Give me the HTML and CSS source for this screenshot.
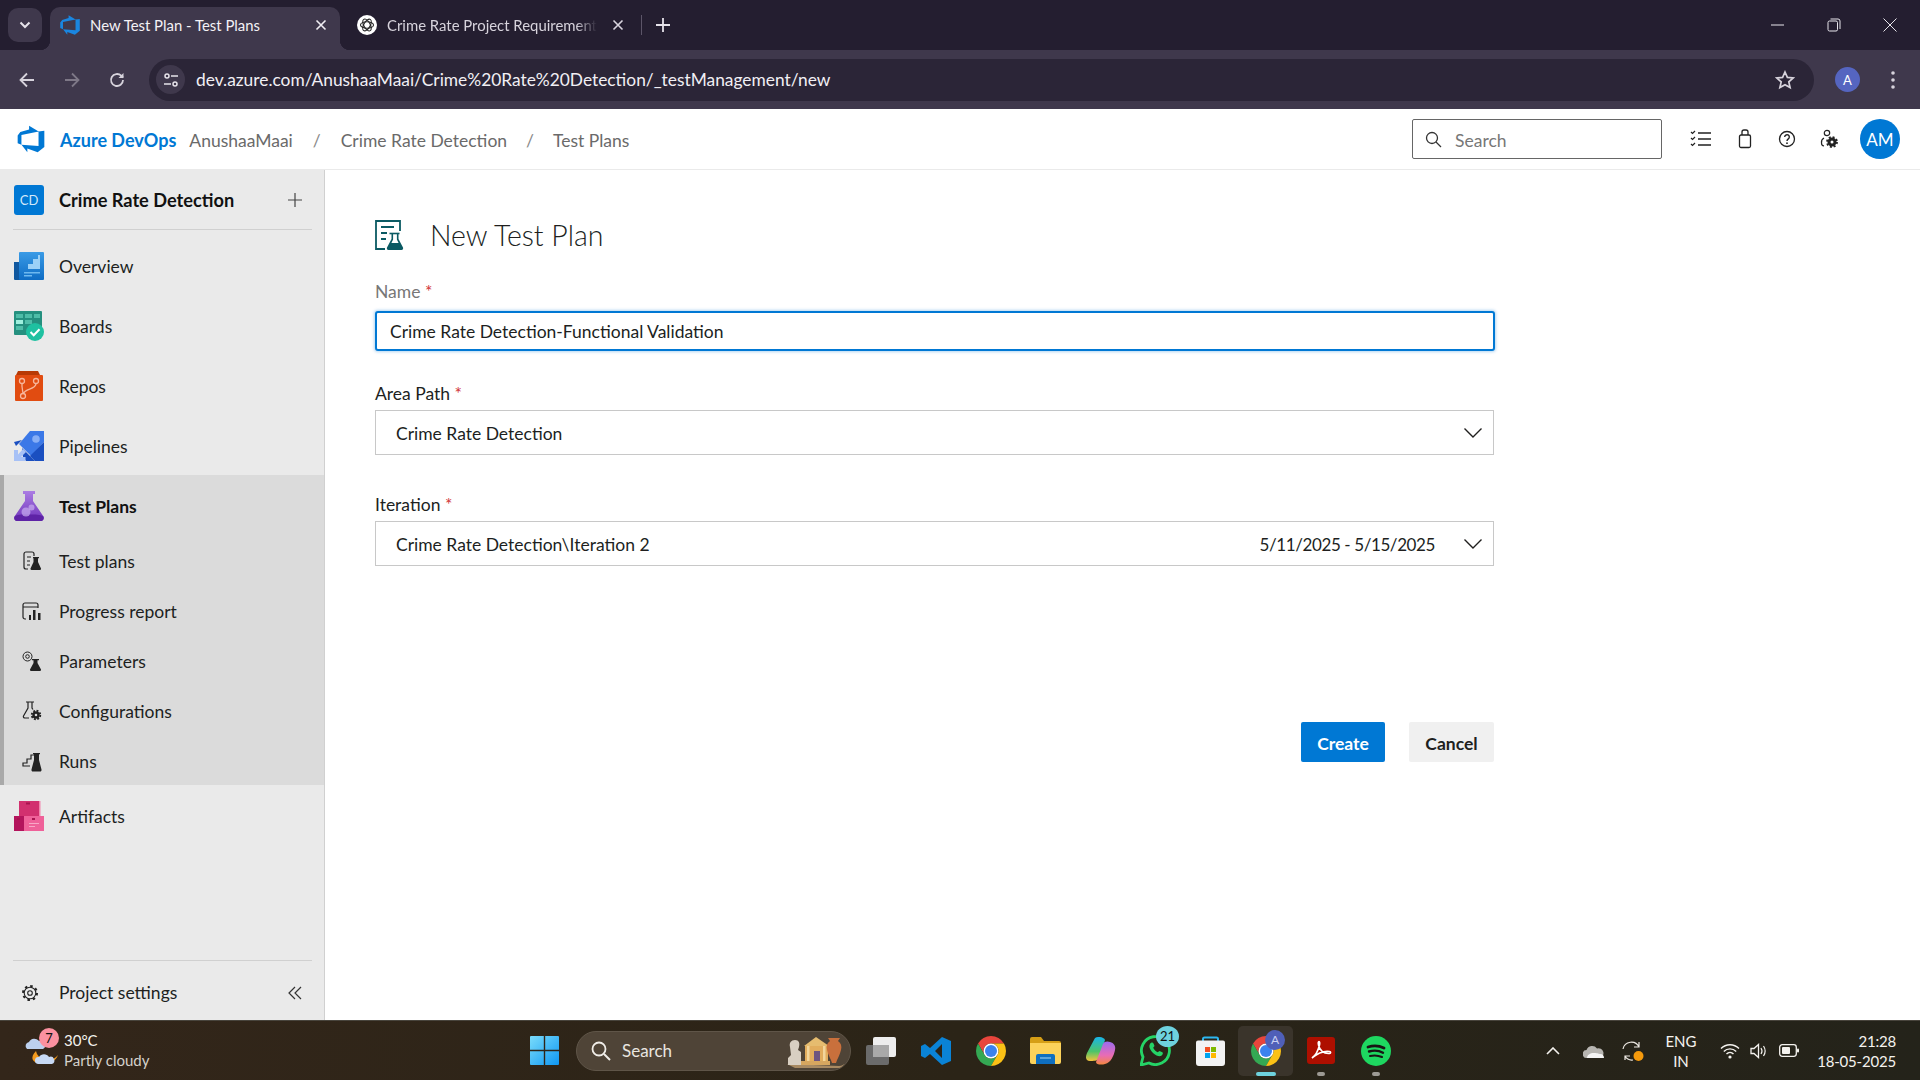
FILE: index.html
```html
<!DOCTYPE html>
<html lang="en">
<head>
<meta charset="utf-8">
<title>New Test Plan - Test Plans</title>
<link rel="stylesheet" href="styles.css">
</head>
<body>
<svg class="defs" width="0" height="0" aria-hidden="true">
  <symbol id="chrome" viewBox="0 0 24 24">
    <path fill="#e8453c" d="M1.61 6A12 12 0 0 1 22.39 6H12A6 6 0 0 0 6.8 15Z"/>
    <path fill="#34a853" d="M1.61 6A12 12 0 0 0 12 24L17.2 15A6 6 0 0 1 6.8 15Z"/>
    <path fill="#fbc116" d="M22.39 6A12 12 0 0 1 12 24L17.2 15A6 6 0 0 0 12 6Z"/>
    <circle cx="12" cy="12" r="6" fill="#fff"/>
    <circle cx="12" cy="12" r="4.8" fill="#3b82ee"/>
  </symbol>
  <symbol id="ado" viewBox="0 0 18 18">
    <path d="M17 4v9.74l-4 3.28-6.2-2.26V17L3.29 12.41l10.23.8V4.44zm-3.41.49L7.85 1v2.29L2.58 4.84 1 6.87v4.61l2.26 1V6.57z"/>
  </symbol>
  <symbol id="chev" viewBox="0 0 20 12">
    <path d="M1.5 1.5 10 10l8.5-8.5" fill="none" stroke="#201f1e" stroke-width="1.4"/>
  </symbol>
</svg>

<div class="tabbar">
  <div class="tab-switch"><svg width="12" height="8" viewBox="0 0 12 8"><path d="M1.5 1.5 6 6l4.5-4.5" fill="none" stroke="#e6e3ea" stroke-width="2"/></svg></div>
  <div class="tab tab-active">
    <svg class="tab-fav fav-blue" width="22" height="22"><use href="#ado"/></svg>
    <span class="tab-title">New Test Plan - Test Plans</span>
    <svg class="tab-x" width="12" height="12" viewBox="0 0 12 12"><path d="M1.5 1.5l9 9m0-9l-9 9" stroke="#f0eef3" stroke-width="1.6"/></svg>
  </div>
  <div class="tab tab-idle">
    <svg class="tab-fav" width="20" height="20" viewBox="0 0 20 20"><circle cx="10" cy="10" r="10" fill="#fff"/><g fill="none" stroke="#222" stroke-width="1.1"><ellipse cx="10" cy="10" rx="6.5" ry="3.2"/><ellipse cx="10" cy="10" rx="6.5" ry="3.2" transform="rotate(60 10 10)"/><ellipse cx="10" cy="10" rx="6.5" ry="3.2" transform="rotate(120 10 10)"/></g></svg>
    <span class="tab-title tab-fade">Crime Rate Project Requirements</span>
    <svg class="tab-x" width="12" height="12" viewBox="0 0 12 12"><path d="M1.5 1.5l9 9m0-9l-9 9" stroke="#d9d5de" stroke-width="1.6"/></svg>
  </div>
  <span class="tab-sep"></span>
  <svg class="tab-new" width="14" height="14" viewBox="0 0 14 14"><path d="M7 0v14M0 7h14" stroke="#e6e3ea" stroke-width="1.8"/></svg>
  <div class="win-ctrls">
    <svg width="14" height="14" viewBox="0 0 14 14"><path d="M0 7h13" stroke="#e8e6ec" stroke-width="1"/></svg>
    <svg width="14" height="14" viewBox="0 0 14 14"><rect x="1" y="3" width="9.5" height="10" rx="1.5" fill="none" stroke="#e8e6ec"/><path d="M3.5 1h7.5a2 2 0 0 1 2 2v8" fill="none" stroke="#e8e6ec"/></svg>
    <svg width="14" height="14" viewBox="0 0 14 14"><path d="M.5.5l13 13m0-13l-13 13" stroke="#e8e6ec" stroke-width="1"/></svg>
  </div>
</div>

<div class="toolbar">
  <svg class="nav-btn" width="18" height="18" viewBox="0 0 18 18"><path d="M16 9H3m6-6.500L2.500 9 9 15.500" fill="none" stroke="#d7d3dc" stroke-width="1.8"/></svg>
  <svg class="nav-btn" width="18" height="18" viewBox="0 0 18 18"><path d="M2 9h13M9 2.500 15.500 9 9 15.500" fill="none" stroke="#7e7887" stroke-width="1.8"/></svg>
  <svg class="nav-btn" width="18" height="18" viewBox="0 0 18 18"><path d="M15 9a6 6 0 1 1-1.800-4.300L15 6.500" fill="none" stroke="#d7d3dc" stroke-width="1.8"/><path d="M15.500 2v5h-5z" fill="#d7d3dc"/></svg>
  <div class="omnibox">
    <span class="site-info"><svg width="16" height="16" viewBox="0 0 16 16"><g fill="none" stroke="#e6e3ea" stroke-width="1.500"><circle cx="4" cy="4" r="2"/><path d="M8 4h7M1 12h7"/><circle cx="12" cy="12" r="2"/></g></svg></span>
    <span class="url">dev.azure.com/AnushaaMaai/Crime%20Rate%20Detection/_testManagement/new</span>
    <svg class="star" width="20" height="20" viewBox="0 0 20 20"><path d="M10 2l2.400 5.400 5.800.6-4.400 3.900 1.300 5.700L10 14.700l-5.100 2.900 1.300-5.700L1.800 8l5.800-.6z" fill="none" stroke="#d7d3dc" stroke-width="1.700"/></svg>
  </div>
  <span class="profile">A</span>
  <svg class="dots" width="4" height="18" viewBox="0 0 4 18"><circle cx="2" cy="2" r="1.800" fill="#d7d3dc"/><circle cx="2" cy="9" r="1.800" fill="#d7d3dc"/><circle cx="2" cy="16" r="1.800" fill="#d7d3dc"/></svg>
</div>

<header class="adoheader">
  <svg class="logo ado-blue" width="30" height="30"><use href="#ado"/></svg>
  <span class="brand">Azure DevOps</span>
  <nav class="crumbs">
    <span class="crumb">AnushaaMaai</span><span class="slash">/</span>
    <span class="crumb">Crime Rate Detection</span><span class="slash">/</span>
    <span class="crumb">Test Plans</span>
  </nav>
  <div class="hsearch">
    <svg width="17" height="17" viewBox="0 0 17 17"><circle cx="7" cy="7" r="5.500" fill="none" stroke="#333" stroke-width="1.300"/><path d="M11 11l5 5" stroke="#333" stroke-width="1.300"/></svg>
    <span>Search</span>
  </div>
  <div class="hicons">
    <svg width="22" height="20" viewBox="0 0 22 20"><path d="M8 4h13M8 10h13M8 16h13" stroke="#222" stroke-width="1.300"/><path d="M1 3l1.500 1.500L5 2M1 9l1.500 1.500L5 8M1 15l1.500 1.500L5 14" fill="none" stroke="#222" stroke-width="1.200"/></svg>
    <svg width="14" height="20" viewBox="0 0 14 20"><rect x="1.500" y="6" width="11" height="12.500" rx="1.500" fill="none" stroke="#222" stroke-width="1.300"/><path d="M4 6V3a2 2 0 0 1 2-2h2a2 2 0 0 1 2 2v3" fill="none" stroke="#222" stroke-width="1.300"/></svg>
    <svg width="18" height="18" viewBox="0 0 18 18"><circle cx="9" cy="9" r="7.500" fill="none" stroke="#222" stroke-width="1.300"/><path d="M6.700 7a2.300 2.300 0 1 1 3.600 1.900C9.400 9.500 9 10 9 11" fill="none" stroke="#222" stroke-width="1.400"/><circle cx="9" cy="13.200" r=".9" fill="#222"/></svg>
    <svg width="18" height="20" viewBox="0 0 18 20"><circle cx="7" cy="4" r="2.700" fill="none" stroke="#222" stroke-width="1.200"/><path d="M4 9a5 5 0 0 0-2.500 5A3 3 0 0 0 4 17" fill="none" stroke="#222" stroke-width="1.200"/><circle cx="12" cy="13" r="3" fill="none" stroke="#222" stroke-width="3"/><circle cx="12" cy="13" r="5" fill="none" stroke="#222" stroke-width="1.800" stroke-dasharray="2 1.930"/></svg>
  </div>
  <span class="avatar">AM</span>
</header>

<div class="workspace">
  <aside class="sidebar">
    <div class="project">
      <span class="project-badge">CD</span>
      <span class="project-name">Crime Rate Detection</span>
      <svg width="16" height="16" viewBox="0 0 16 16"><path d="M8 1v14M1 8h14" stroke="#444" stroke-width="1.200"/></svg>
    </div>
    <div class="nav">
      <a class="nav-item">
        <svg class="nav-ico" width="30" height="30" viewBox="0 0 30 30"><defs><linearGradient id="ov" x1="0" y1="0" x2="0" y2="1"><stop offset="0" stop-color="#3a9be6"/><stop offset="1" stop-color="#0e6cc4"/></linearGradient></defs><path d="M0 11h6v18H1a1 1 0 0 1-1-1z" fill="#10589f"/><rect x="5" y="1" width="25" height="28" rx="1" fill="url(#ov)"/><path d="M14 18v-5h5V8h5V4h2v14z" fill="#9bd1f7"/><path d="M10 21h16v1.500H10zM10 24h8v1.500h-8z" fill="#6db8ef"/></svg>
        <span>Overview</span>
      </a>
      <a class="nav-item">
        <svg class="nav-ico" width="30" height="30" viewBox="0 0 30 30"><rect width="28" height="24" rx="1" fill="#25907f"/><g fill="#4fbda8"><rect x="2" y="3" width="7" height="4"/><rect x="11" y="3" width="7" height="4"/><rect x="20" y="3" width="6" height="4"/><rect x="11" y="9" width="7" height="4"/><rect x="2" y="15" width="7" height="4"/></g><rect x="2" y="9" width="7" height="4" fill="#9ff0de"/><circle cx="21" cy="21" r="9" fill="#1fc1a1"/><path d="M16.500 21l3.200 3.200 5.800-6" fill="none" stroke="#fff" stroke-width="2"/></svg>
        <span>Boards</span>
      </a>
      <a class="nav-item">
        <svg class="nav-ico" width="30" height="30" viewBox="0 0 30 30"><path d="M4 0h20l2 4H2z" fill="#b83a06"/><rect x="1" y="4" width="28" height="26" rx="1" fill="#e14c11"/><g fill="none" stroke="#f7b79d" stroke-width="1.300"><circle cx="8" cy="10" r="2.500"/><circle cx="22" cy="10" r="2.500"/><circle cx="9" cy="25" r="2.500"/><path d="M8 12.500v3l1 7M22 12.500c0 6-11 5-12.500 10"/></g></svg>
        <span>Repos</span>
      </a>
      <a class="nav-item">
        <svg class="nav-ico" width="30" height="30" viewBox="0 0 30 30"><path d="M16 0h14v11L17 25 5 13z" fill="#3b78e7"/><path d="M0 11 8 9 2 15z" fill="#1a4fc0"/><path d="M30 11v19h-9l-5-5z" fill="#1a4fc0"/><path d="M8 17 15 24 21 30H12L9 26z" fill="#1a4fc0"/><circle cx="22" cy="8" r="3.800" fill="#87aef5"/><path d="M0 30V19h4v4.500L9 18l3 3-5 5h4.500v4z" fill="#a7c1f6"/></svg>
        <span>Pipelines</span>
      </a>
      <div class="nav-group">
        <a class="nav-item nav-current">
          <svg class="nav-ico" width="30" height="30" viewBox="0 0 30 30"><defs><linearGradient id="fl" x1="0" y1="0" x2="0" y2="1"><stop offset="0" stop-color="#ab7de3"/><stop offset="1" stop-color="#6f33bb"/></linearGradient></defs><path d="M9 0h12v3h-2v7l10.500 15.500c1 2-.2 4.500-2.500 4.500H3c-2.300 0-3.500-2.500-2.500-4.500L11 10V3H9z" fill="url(#fl)"/><path d="M.6 25.500 c3-2 6-2 14-2s11 0 14.800 2c.8 2-.4 4.500-2.400 4.500H3c-2.300 0-3.400-2.500-2.400-4.500z" fill="#5e23a6"/><circle cx="12" cy="21" r="4.500" fill="#c9aef0" fill-opacity=".7"/><circle cx="17.500" cy="16.500" r="3" fill="#c9aef0" fill-opacity=".7"/></svg>
          <span>Test Plans</span>
        </a>
        <a class="nav-sub">
          <svg class="sub-ico" width="20" height="20" viewBox="0 0 20 20"><path d="M10 1H4a2 2 0 0 0-2 2v13a2 2 0 0 0 2 2h2M10 1a2 2 0 0 1 2 2v2" fill="none" stroke="#222" stroke-width="1.200"/><path d="M5 6h4M5 10h3M5 14h3" stroke="#222" stroke-width="1.200"/><path d="M11 6h6v1.300h-1V11l3 6.500c.2.700-.2 1.500-1 1.500H9.500c-.8 0-1.200-.8-1-1.500l3-6.500V7.300H11z" fill="#222"/></svg>
          <span>Test plans</span>
        </a>
        <a class="nav-sub">
          <svg class="sub-ico" width="20" height="20" viewBox="0 0 20 20"><path d="M4 18H3a2 2 0 0 1-2-2V4a2 2 0 0 1 2-2h11a2 2 0 0 1 2 2v3M1 6h15" fill="none" stroke="#222" stroke-width="1.200"/><path d="M7 14h2v5H7zM11 9h2.500v10H11zM16 12h2.500v7H16z" fill="#222"/></svg>
          <span>Progress report</span>
        </a>
        <a class="nav-sub">
          <svg class="sub-ico" width="20" height="20" viewBox="0 0 20 20"><circle cx="5.500" cy="5.500" r="4.500" fill="none" stroke="#222" stroke-width="1"/><circle cx="5.500" cy="5.500" r="1.800" fill="none" stroke="#222" stroke-width="1"/><path d="M10 8h7v1.300h-1.500V12l3.500 6.500c.2.700-.2 1.500-1 1.500H9c-.8 0-1.200-.8-1-1.500l3.500-6.500V9.300H10z" fill="#222"/></svg>
          <span>Parameters</span>
        </a>
        <a class="nav-sub">
          <svg class="sub-ico" width="20" height="20" viewBox="0 0 20 20"><path d="M4 1h8M6 1v6L1.500 15c-.5 1 .2 2 1.500 2h4M10 1v6l1 1.500" fill="none" stroke="#222" stroke-width="1.200"/><circle cx="14" cy="14" r="2.500" fill="none" stroke="#222" stroke-width="2.400"/><circle cx="14" cy="14" r="4.300" fill="none" stroke="#222" stroke-width="1.800" stroke-dasharray="1.900 1.480"/></svg>
          <span>Configurations</span>
        </a>
        <a class="nav-sub">
          <svg class="sub-ico" width="20" height="20" viewBox="0 0 20 20"><path d="M8 14H1v-3h4V7h4V3h3" fill="none" stroke="#222" stroke-width="1.200"/><path d="M11 1h7v1.300h-1V8l2.500 9.500c.2 1-.3 2-1.300 2h-7.400c-1 0-1.500-1-1.300-2L12 8V2.300h-1z" fill="#222"/></svg>
          <span>Runs</span>
        </a>
      </div>
      <a class="nav-item">
        <svg class="nav-ico" width="30" height="30" viewBox="0 0 30 30"><rect x="5" width="20" height="15" fill="#d2306f"/><rect x="25" width="1.500" height="15" fill="#f186ad"/><rect y="15" width="10" height="15" fill="#b3145c"/><rect x="10" y="15" width="20" height="15" fill="#ef6199"/><path d="M12 1.500h4v2h-4zM3 17h3v2H3zM18 17h3v2h-3z" fill="#a9124f"/><path d="M15 22h10v1H15zM15 25h6v1h-6z" fill="#f8a7c6"/></svg>
        <span>Artifacts</span>
      </a>
    </div>
    <div class="side-foot">
      <svg class="foot-gear" width="18" height="18" viewBox="0 0 18 18"><circle cx="9" cy="9" r="5.800" fill="none" stroke="#222" stroke-width="1.100"/><circle cx="9" cy="9" r="7" fill="none" stroke="#222" stroke-width="2" stroke-dasharray="2.500 3"/><circle cx="9" cy="9" r="2.300" fill="none" stroke="#222" stroke-width="1.100"/></svg>
      <span class="foot-text">Project settings</span>
      <svg width="14" height="14" viewBox="0 0 14 14"><path d="M7 1 1 7l6 6M13 1 7 7l6 6" fill="none" stroke="#333" stroke-width="1.200"/></svg>
    </div>
  </aside>

  <main class="content">
    <div class="title-row">
      <svg width="29" height="30" viewBox="0 0 29 30"><path d="M10 29H1V1h24v10" fill="none" stroke="#0b5a63" stroke-width="1.800"/><path d="M6 7h13M6 13h6M6 19h5" stroke="#0b5a63" stroke-width="1.800"/><path d="M14.500 13.500h10" stroke="#0b5a63" stroke-width="1.600"/><path d="M16.500 14v5L12 27.500c-.5 1 .2 2.500 1.500 2.500h13c1.300 0 2-1.500 1.500-2.500L23.500 19v-5h-1.600v5.500l1.700 3.500h-7.200l1.700-3.500V14z" fill="#0b5a63"/><path d="M16 23h8l3.500 6h-15z" fill="#0b5a63"/></svg>
      <h1>New Test Plan</h1>
    </div>
    <label class="field-label label-dim">Name <em>*</em></label>
    <input class="text-input" value="Crime Rate Detection-Functional Validation">
    <label class="field-label label-gap">Area Path <em>*</em></label>
    <div class="select"><span class="grow">Crime Rate Detection</span><svg width="20" height="12"><use href="#chev"/></svg></div>
    <label class="field-label label-gap2">Iteration <em>*</em></label>
    <div class="select"><span class="grow">Crime Rate Detection\Iteration 2</span><span class="dates">5/11/2025 - 5/15/2025</span><svg width="20" height="12"><use href="#chev"/></svg></div>
    <div class="actions">
      <button class="btn btn-primary">Create</button>
      <button class="btn">Cancel</button>
    </div>
  </main>
</div>

<footer class="taskbar">
  <div class="weather">
    <svg width="36" height="40" viewBox="0 0 36 40"><path d="M12 20a12 10 0 0 0 22 4c-3 8-12 10-20 8-6-1-8-6-2-12z" fill="#f29a1f"/><path d="M3 18a4 4 0 0 1 2-7 6 6 0 0 1 10-1 4 4 0 0 1 4 8z" fill="#bcd0ee"/><path d="M14 33a3.500 3.500 0 0 1 1-7 6 6 0 0 1 10 0 3.500 3.500 0 0 1 3 7z" fill="#c7d9f4"/></svg>
    <span class="weather-badge">7</span>
    <div class="weather-text"><span>30°C</span><span class="weather-sub">Partly cloudy</span></div>
  </div>
  <svg class="start" width="29" height="29" viewBox="0 0 29 29"><defs><linearGradient id="win" x1="0" y1="0" x2="1" y2="1"><stop offset="0" stop-color="#7adcfb"/><stop offset="1" stop-color="#0f97f2"/></linearGradient></defs><path d="M0 1a1 1 0 0 1 1-1h12.800v13.800H0zM15.200 0H28a1 1 0 0 1 1 1v12.800H15.200zM0 15.200h13.800V29H1a1 1 0 0 1-1-1zM15.200 15.200H29V28a1 1 0 0 1-1 1H15.200z" fill="url(#win)"/></svg>
  <div class="tsearch">
    <svg width="20" height="20" viewBox="0 0 20 20"><circle cx="8" cy="8" r="6.500" fill="none" stroke="#f0ede8" stroke-width="1.800"/><path d="M13 13l6 6" stroke="#f0ede8" stroke-width="2"/></svg>
    <span class="grow">Search</span>
    <svg class="museum" width="58" height="34" viewBox="0 0 58 34"><path d="M0 30 52 32c3 0 5-2 6-2l-4 4H8z" fill="#a88a62"/><path d="M3 13c-1-4 1-7 5-7s5 3 4 7l-1 3 3 2v13H1v-7l3-3z" fill="#d8cfc2"/><path d="M17 12 29 3l13 9z" fill="#e6bc6f"/><rect x="18" y="12" width="23" height="15" fill="#e2ad5d"/><rect x="27" y="17" width="6" height="10" fill="#6e5580"/><rect x="20" y="12" width="2.500" height="15" fill="#f3d69b"/><rect x="36" y="12" width="2.500" height="15" fill="#f3d69b"/><path d="M14 27h29v4H14z" fill="#d6a65f"/><path d="M41 4h12l-2 3c3 2 4 5 3 9-1 5-4 9-5 13h-4c-1-4-4-8-5-13-1-4 0-7 3-9z" fill="#c9703c"/></svg>
  </div>
  <div class="tslot"><svg width="30" height="28" viewBox="0 0 30 28"><rect y="8" width="23" height="20" rx="2" fill="#6b6b6b"/><rect x="7" width="23" height="20" rx="2" fill="#eeeeee"/><rect x="7" y="8" width="16" height="12" fill="#a9a9a9"/></svg></div>
  <div class="tslot"><svg width="30" height="30" viewBox="0 0 30 30"><path d="M21 1 30 5v20l-9 4L9 18l-5 4-4-2V10l4-2 5 4zM21 8 14 15l7 7z" fill="#0a83d6"/></svg></div>
  <div class="tslot"><svg width="30" height="30"><use href="#chrome"/></svg></div>
  <div class="tslot"><svg width="31" height="27" viewBox="0 0 31 27"><path d="M0 2a2 2 0 0 1 2-2h9l3 4h15a2 2 0 0 1 2 2v4H0z" fill="#d69f16"/><path d="M0 6h31v19a2 2 0 0 1-2 2H2a2 2 0 0 1-2-2z" fill="#fcd25a"/><path d="M6 19a2 2 0 0 1 2-2h15a2 2 0 0 1 2 2v8H6z" fill="#0f6fc0"/><path d="M10 21h11" stroke="#8ec8f2" stroke-width="1.200"/></svg></div>
  <div class="tslot"><svg width="30" height="28" viewBox="0 0 30 28"><defs><linearGradient id="cp1" x1="0" y1="0" x2="0" y2="1"><stop offset="0" stop-color="#18b4e8"/><stop offset=".6" stop-color="#4cc46a"/><stop offset="1" stop-color="#f5c33b"/></linearGradient><linearGradient id="cp2" x1="0" y1="0" x2="0" y2="1"><stop offset="0" stop-color="#9a6bf0"/><stop offset=".6" stop-color="#e86cb5"/><stop offset="1" stop-color="#f4873f"/></linearGradient></defs><path d="M9 1c3-2 9-1 10 2l-6 18c-1 3-6 3-9 3-4 0-5-3-3-8z" fill="url(#cp1)"/><path d="M19 27c-3 1-9 1-9-2l7-18c1-3 5-3 7-2 4 1 6 4 5 8-1 5-4 13-10 14z" fill="url(#cp2)"/></svg></div>
  <div class="tslot"><svg width="31" height="31" viewBox="0 0 31 31"><path d="M1 30l2-8a14 14 0 1 1 6 6z" fill="none" stroke="#25d366" stroke-width="2.800"/><path d="M10 9c1-2 3-2 3.500-.5l1 2.500-1.300 1.700c1 2 2.600 3.500 4.500 4.500L19.500 16l2.800 1.300c1 .5.700 2.400-1 3.500-2 1.200-5 0-8-2.500C10 15 8.500 11.500 10 9z" fill="#25d366"/></svg><span class="wa-badge">21</span></div>
  <div class="tslot"><svg width="29" height="30" viewBox="0 0 29 30"><path d="M7 6V3a1.500 1.500 0 0 1 1.500-1.500h12A1.500 1.500 0 0 1 22 3v3" fill="none" stroke="#2db7f0" stroke-width="2"/><path d="M0 6.500a2 2 0 0 1 2-2h25a2 2 0 0 1 2 2V27a3 3 0 0 1-3 3H3a3 3 0 0 1-3-3z" fill="#f3f3f3"/><rect x="9" y="11" width="5" height="5" fill="#f25022"/><rect x="15" y="11" width="5" height="5" fill="#7fba00"/><rect x="9" y="17" width="5" height="5" fill="#00a4ef"/><rect x="15" y="17" width="5" height="5" fill="#ffb900"/></svg></div>
  <div class="tslot tslot-active"><svg class="chrome-lg" width="30" height="30"><use href="#chrome"/></svg><span class="chrome-badge">A</span><span class="ind ind-on"></span></div>
  <div class="tslot"><svg width="28" height="27" viewBox="0 0 28 27"><rect width="28" height="27" rx="3" fill="#ae0f00"/><path d="M5 21c3-2 6-7 7.500-13 .4-2 .2-3.500-.5-3.500s-1 1.500-.5 3.500c1 5 5 9 11 8.500 1.500-.3 1.500-1.700 0-2-4-.6-11 1-17.500 6.500z" fill="none" stroke="#fff" stroke-width="1.600"/></svg><span class="ind"></span></div>
  <div class="tslot"><svg width="30" height="30" viewBox="0 0 30 30"><circle cx="15" cy="15" r="15" fill="#1ed760"/><g fill="none" stroke="#191414" stroke-linecap="round"><path d="M7 11c6-2 11-1.500 16 1" stroke-width="2.800"/><path d="M8 15.500c5-1.500 10-1 14 1.200" stroke-width="2.400"/><path d="M9 20c4-1 8-.8 12 1" stroke-width="2"/></g></svg><span class="ind"></span></div>
  <div class="tray">
    <div class="tray-slot tw40"><svg width="14" height="8" viewBox="0 0 14 8"><path d="M1 7l6-6 6 6" fill="none" stroke="#f4f2ee" stroke-width="1.600"/></svg></div>
    <div class="tray-slot tw40"><svg width="21" height="14" viewBox="0 0 21 14"><path d="M4 14a4 4 0 0 1-.5-8A6 6 0 0 1 14 4.500 4.500 4.500 0 0 1 17 14z" fill="#b7b5b1"/><path d="M4 14c0-3 3-5 7-5 4 0 5 1 6 1 3 0 4 2 4 4z" fill="#f4f4f4"/></svg></div>
    <div class="tray-slot tw40"><svg width="22" height="22" viewBox="0 0 22 22"><path d="M1 9a8.500 8.500 0 0 1 16-2M17 2v5h-5M3 20v-4h5M3 16a8 8 0 0 0 8 4" fill="none" stroke="#eeeae4" stroke-width="1.200"/><circle cx="16.500" cy="16" r="5" fill="#f59a0c"/></svg></div>
    <div class="tray-slot tw56 tray-lang"><span>ENG</span><span>IN</span></div>
    <div class="tray-slot tw38"><svg width="20" height="16" viewBox="0 0 20 16"><g fill="none" stroke="#f4f2ee" stroke-width="1.400"><path d="M1 5.500c5-5 13-5 18 0M3.800 8.500c3.500-3.500 8.900-3.500 12.400 0M6.500 11c2-2 5-2 7 0"/></g><circle cx="10" cy="14" r="1.600" fill="#f4f2ee"/></svg></div>
    <div class="tray-slot tw20"><svg width="18" height="16" viewBox="0 0 18 16"><path d="M1 5.500h3L8.500 1.500v13L4 10.500H1z" fill="none" stroke="#f4f2ee" stroke-width="1.300"/><path d="M11 5c1.200 1.800 1.200 4.200 0 6M13.500 3c2 3 2 7 0 10" fill="none" stroke="#f4f2ee" stroke-width="1.200"/></svg></div>
    <div class="tray-slot tw42"><svg width="20" height="13" viewBox="0 0 20 13"><rect x=".7" y=".7" width="16.600" height="11.600" rx="2.500" fill="none" stroke="#f4f2ee" stroke-width="1.300"/><rect x="3" y="3" width="8" height="7" rx="1" fill="#f4f2ee"/><rect x="18" y="4.500" width="2" height="4" rx="1" fill="#f4f2ee"/></svg></div>
    <div class="clock"><span>21:28</span><span>18-05-2025</span></div>
  </div>
</footer>
</body>
</html>
```
FILE: styles.css
```css
* { box-sizing: border-box; }
html, body { margin: 0; padding: 0; }
body {
  width: 1920px;
  height: 1080px;
  overflow: hidden;
  display: flex;
  flex-direction: column;
  font-family: "Lato", "Liberation Sans", sans-serif;
  font-size: 17.5px;
  color: #201f1e;
  background: #fff;
}
.defs { position: absolute; }
.grow { flex: 1; }
.ado-blue { fill: #0078d4; }
.fav-blue { fill: #1a86e0; }
svg { flex: none; display: block; }

/* browser tab strip */
.tabbar {
  height: 50px;
  flex: none;
  display: flex;
  align-items: flex-end;
  background: #241e30;
  color: #fff;
  font-size: 14.9px;
}
.tab-switch {
  width: 34px;
  height: 34px;
  margin: 0 0 8px 8px;
  border-radius: 10px;
  background: #3f384c;
  display: flex;
  align-items: center;
  justify-content: center;
}
.tab {
  height: 43px;
  display: flex;
  align-items: center;
  padding: 0 13px 7px 9px;
  flex: none;
}
.tab-active {
  width: 290px;
  margin-left: 8px;
  background: #3f384c;
  border-radius: 10px 10px 0 0;
  position: relative;
}
.tab-active::before,
.tab-active::after {
  content: "";
  position: absolute;
  bottom: 0;
  width: 10px;
  height: 10px;
}
.tab-active::before { left: -10px; background: radial-gradient(circle at 0 0, #241e30 10px, #3f384c 10.500px); }
.tab-active::after { right: -10px; background: radial-gradient(circle at 100% 0, #241e30 10px, #3f384c 10.500px); }
.tab-idle { width: 301px; padding-left: 17px; padding-right: 17px; }
.tab-fav { margin-right: 10px; }
.tab-active .tab-fav { margin-right: 9px; }
.tab-title { flex: 1; white-space: nowrap; overflow: hidden; color: #f4f2f6; }
.tab-idle .tab-title { color: #d7d3dc; }
.tab-fade { -webkit-mask-image: linear-gradient(90deg, #000 90%, transparent 100%); mask-image: linear-gradient(90deg, #000 90%, transparent 100%); margin-right: 7px; }
.tab-x { margin-left: 8px; }
.tab-sep { width: 1px; height: 20px; margin: 0 0 15px 0; background: #5c5568; }
.tab-new { margin: 0 0 18px 14px; }
.win-ctrls {
  margin-left: auto;
  height: 50px;
  display: flex;
  align-items: center;
  gap: 42px;
  padding-right: 23px;
}

/* browser toolbar */
.toolbar {
  height: 59px;
  flex: none;
  display: flex;
  align-items: center;
  background: #3f384c;
  color: #fff;
}
.nav-btn { margin-left: 27px; }
.nav-btn:first-child { margin-left: 18px; }
.omnibox {
  width: 1665px;
  height: 42px;
  margin-left: 23px;
  border-radius: 21px;
  background: #2b2537;
  display: flex;
  align-items: center;
  padding: 0 19px 0 7px;
}
.site-info {
  width: 29px;
  height: 29px;
  border-radius: 50%;
  background: #3f384c;
  display: flex;
  align-items: center;
  justify-content: center;
  margin-right: 11px;
}
.url { flex: 1; font-size: 17.350px; color: #f1eff4; }
.profile {
  width: 25px;
  height: 25px;
  margin-left: 21px;
  border-radius: 50%;
  background: #5565c0;
  color: #fff;
  font-size: 13px;
  display: flex;
  align-items: center;
  justify-content: center;
}
.dots { margin-left: 31px; }

/* ADO header */
.adoheader {
  height: 61px;
  flex: none;
  display: flex;
  align-items: center;
  border-bottom: 1px solid #eaeaea;
  padding-left: 16px;
}
.brand { margin-left: 14px; padding-top: 2px; font-size: 18px; color: #0078d4; font-weight: 700; white-space: nowrap; }
.crumbs { display: flex; align-items: center; margin-left: 13px; padding-top: 2px; color: #6a6a6a; white-space: nowrap; }
.slash { margin: 0 20px; color: #8a8a8a; }
.slash ~ .slash { margin: 0 19px; }
.hsearch {
  margin-left: auto;
  width: 250px;
  height: 40px;
  border: 1px solid #666;
  border-radius: 2px;
  display: flex;
  align-items: center;
  gap: 13px;
  padding-left: 12px;
  color: #777;
}
.hsearch span { padding-top: 2px; }
.hicons { display: flex; align-items: center; margin-left: 28px; gap: 26px; }
.hicons svg:last-child { margin-left: -2px; }
.avatar {
  width: 40px;
  height: 40px;
  margin: 0 20px 0 22px;
  border-radius: 50%;
  background: #0078d4;
  color: #fff;
  display: flex;
  align-items: center;
  justify-content: center;
  font-size: 17px;
}

/* work area */
.workspace { flex: 1; min-height: 0; display: flex; }
.sidebar {
  width: 325px;
  flex: none;
  background: #eaeaea;
  border-right: 1px solid #d0d0d0;
  display: flex;
  flex-direction: column;
}
.project {
  height: 60px;
  margin: 0 12px 0 13px;
  display: flex;
  align-items: center;
  border-bottom: 1px solid #d0d0d0;
  padding-right: 9px;
}
.project-badge {
  width: 30px;
  height: 30px;
  margin: 0 15px 0 1px;
  border-radius: 3px;
  background: #0078d4;
  color: #d4e9fa;
  font-size: 13px;
  display: flex;
  align-items: center;
  justify-content: center;
}
.project-name { flex: 1; font-size: 18.200px; font-weight: 700; color: #111; }
.nav { flex: 1; padding-top: 6px; }
.nav-item {
  height: 60px;
  display: flex;
  align-items: center;
  gap: 15px;
  padding-left: 14px;
}
.nav-group { margin: -1px 0 1px; padding-top: 1px; background: #dbdbdb; border-left: 4px solid #a9a9a9; }
.nav-current { padding-left: 10px; font-weight: 700; color: #111; }
.nav-sub {
  height: 50px;
  display: flex;
  align-items: center;
  padding-left: 18px;
}
.nav-sub:last-child { height: 49px; padding-top: 2px; }
.sub-ico { width: 20px; margin-right: 17px; }
.side-foot {
  height: 60px;
  margin: 0 12px 0 13px;
  border-top: 1px solid #d0d0d0;
  display: flex;
  align-items: center;
  padding: 4px 10px 0 8px;
}
.foot-text { flex: 1; margin-left: 20px; }
.content { flex: 1; padding: 45px 0 0 50px; }
.title-row { height: 40px; display: flex; align-items: center; gap: 26px; }
h1 { margin: 0; font-size: 28.500px; font-weight: 300; color: #201f1e; }
.field-label { display: block; height: 24px; line-height: 26px; margin-top: 24px; }
.field-label em { color: #d13438; font-style: normal; }
.label-dim { color: #777; }
.label-gap { margin-top: 30px; }
.label-gap2 { margin-top: 37px; }
.text-input {
  display: block;
  width: 1120px;
  height: 40px;
  margin-top: 8px;
  padding: 0 13px;
  border: 2px solid #0078d4;
  border-radius: 3px;
  box-shadow: 0 0 3px 1px rgba(0, 120, 212, .3);
  font: inherit;
  color: #201f1e;
  outline: none;
}
.select {
  width: 1119px;
  height: 45px;
  margin-top: 5px;
  border: 1px solid #c8c8c8;
  display: flex;
  align-items: center;
  padding: 0 10px 0 20px;
}
.select span { padding-top: 2px; }
.dates { margin-right: 28px; font-size: 17px; letter-spacing: -.4px; }
.actions { width: 1119px; margin-top: 156px; display: flex; justify-content: flex-end; gap: 24px; }
.btn {
  height: 40px;
  width: 85px;
  padding: 2px 0 0;
  border: 0;
  border-radius: 2px;
  background: #f0f0f0;
  color: #201f1e;
  font: inherit;
  font-weight: 700;
}
.btn-primary { width: 84px; background: #0078d4; color: #fff; }

/* windows taskbar */
.taskbar {
  height: 60px;
  flex: none;
  display: flex;
  align-items: center;
  background: linear-gradient(90deg, #33261a 0%, #2b2417 50%, #24231a 100%);
  border-top: 1px solid #48443c;
  color: #f4f2ee;
  font-size: 15px;
}
.weather {
  width: 530px;
  padding-left: 24px;
  display: flex;
  align-items: center;
  position: relative;
}
.weather-badge {
  position: absolute;
  left: 39px;
  top: -3px;
  width: 20px;
  height: 20px;
  border-radius: 50%;
  background: #fb91a0;
  color: #111;
  font-size: 13px;
  display: flex;
  align-items: center;
  justify-content: center;
}
.weather-text { display: flex; flex-direction: column; margin: -2px 0 0 4px; line-height: 20px; }
.weather-sub { color: #d4d1cb; }
.start { margin-right: 17px; }
.tsearch {
  width: 275px;
  height: 40px;
  border-radius: 20px;
  background: #4f4437;
  border: 1px solid #5f5548;
  display: flex;
  align-items: center;
  gap: 11px;
  padding-left: 14px;
  margin-right: 2px;
  overflow: hidden;
  font-size: 17px;
  color: #e9e6e0;
}
.museum { margin-right: 5px; align-self: flex-end; margin-bottom: 2px; }
.tslot {
  width: 55px;
  height: 50px;
  display: flex;
  align-items: center;
  justify-content: center;
  position: relative;
}
.tslot-active { background: #3a342b; border-radius: 5px; }
.ind {
  position: absolute;
  left: 50%;
  bottom: 0;
  width: 8px;
  height: 4px;
  margin-left: -4px;
  border-radius: 2px;
  background: #9d9a94;
}
.ind-on { width: 20px; margin-left: -10px; background: #6ed2de; }
.wa-badge {
  position: absolute;
  left: 28px;
  top: 0;
  width: 23px;
  height: 21px;
  border-radius: 50%;
  background: #6ed2de;
  color: #111;
  font-size: 13px;
  display: flex;
  align-items: center;
  justify-content: center;
}
.chrome-badge {
  position: absolute;
  left: 27px;
  top: 4px;
  width: 20px;
  height: 20px;
  border-radius: 50%;
  background: #4f5fb8;
  color: #c9d0f2;
  font-size: 12px;
  display: flex;
  align-items: center;
  justify-content: center;
}
.tray { margin-left: auto; display: flex; align-items: center; padding-right: 24px; }
.tray-slot { display: flex; align-items: center; justify-content: center; }
.tw40 { width: 40px; }
.tw56 { width: 56px; }
.tw38 { width: 38px; margin-left: 2px; }
.tw20 { width: 20px; }
.tw42 { width: 40px; }
.tray-lang { flex-direction: column; line-height: 20px; }
.clock { width: 87px; display: flex; flex-direction: column; align-items: flex-end; line-height: 20px; white-space: nowrap; letter-spacing: -.2px; }
```
